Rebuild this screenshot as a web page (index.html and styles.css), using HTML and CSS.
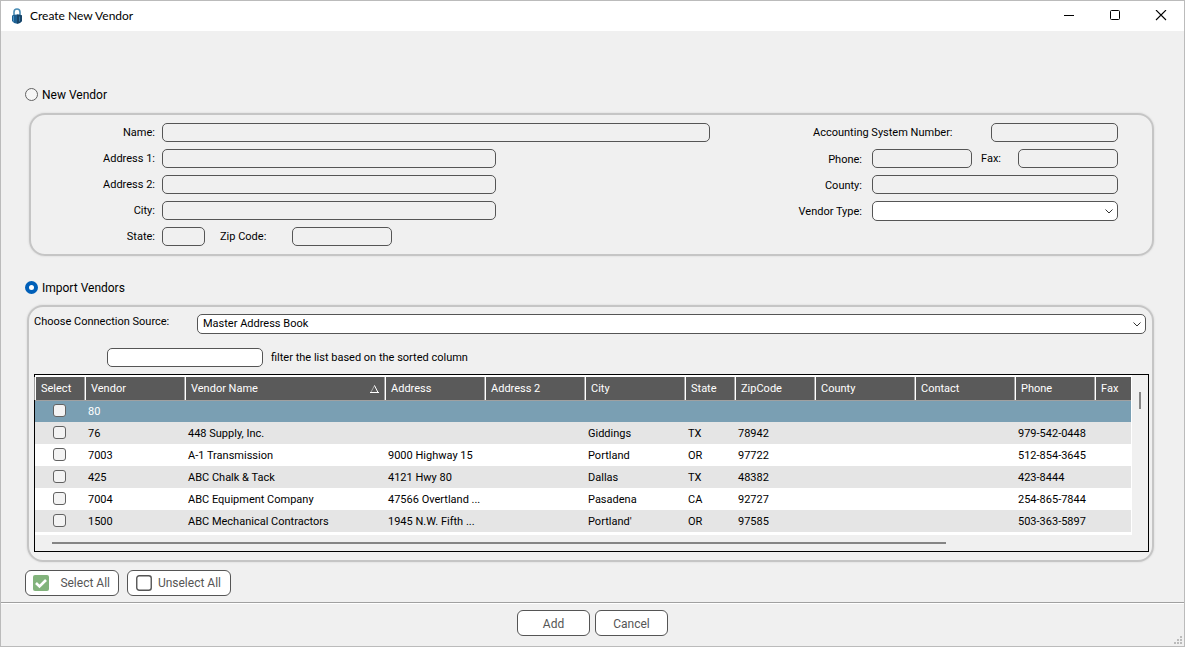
FILE: index.html
```html
<!DOCTYPE html>
<html lang="en">
<head>
<meta charset="utf-8">
<title>Create New Vendor</title>
<link rel="stylesheet" href="styles.css">
</head>
<body>
<div class="window">
  <header class="titlebar">
    <svg class="lock" width="12" height="16" viewBox="0 0 12 16" aria-hidden="true">
      <path d="M3 8V4a3 3 0 0 1 6 0v4" fill="none" stroke="#4a8db5" stroke-width="1.6"/>
      <path d="M1 7.500Q6 5.500 11 7.500V13Q9 15.800 6 15.800T1 13Z" fill="#1d5f91"/>
      <path d="M6 6.500Q9 6.500 11 7.500V13Q9 15.800 6 15.800Z" fill="#174468"/>
      <path d="M2.500 8v5.500" stroke="#4a93c4" stroke-width="1"/>
      <path d="M8.500 8.500v5" stroke="#3574a0" stroke-width="1"/>
    </svg>
    <h1 class="title">Create New Vendor</h1>
    <div class="window-controls">
      <button class="window-button" type="button" aria-label="Minimize"><svg width="12" height="12" viewBox="0 0 12 12"><path d="M1 5.500h10" stroke="#000"/></svg></button>
      <button class="window-button" type="button" aria-label="Maximize"><svg width="12" height="12" viewBox="0 0 12 12"><rect x="1.500" y=".5" width="9" height="9" rx="1" fill="none" stroke="#000"/></svg></button>
      <button class="window-button" type="button" aria-label="Close"><svg width="12" height="12" viewBox="0 0 12 12"><path d="M1 0l10 10M11 0L1 10" stroke="#000" stroke-width="1.100"/></svg></button>
    </div>
  </header>

  <main class="content">
    <label class="mode"><input class="radio" type="radio" name="mode">New Vendor</label>
    <section class="panel new-vendor">
      <div class="form-left">
        <label class="label" for="name">Name:</label><input class="field w-name" id="name" type="text">
        <label class="label" for="address1">Address 1:</label><input class="field w-address" id="address1" type="text">
        <label class="label" for="address2">Address 2:</label><input class="field w-address" id="address2" type="text">
        <label class="label" for="city">City:</label><input class="field w-address" id="city" type="text">
        <label class="label" for="state">State:</label>
        <div class="pair">
          <input class="field w-state" id="state" type="text">
          <label class="zip-label" for="zip">Zip Code:</label><input class="field w-short" id="zip" type="text">
        </div>
      </div>
      <div class="form-right">
        <div class="account"><label for="account">Accounting System Number:</label><input class="field w-account" id="account" type="text"></div>
        <label class="label" for="phone">Phone:</label>
        <div class="pair spread">
          <input class="field w-short" id="phone" type="text">
          <label class="fax-label" for="fax">Fax:</label><input class="field w-short" id="fax" type="text">
        </div>
        <label class="label" for="county">County:</label><input class="field" id="county" type="text">
        <label class="label" for="type">Vendor Type:</label><select class="select" id="type"><option></option></select>
      </div>
    </section>

    <label class="mode import-mode"><input class="radio" type="radio" name="mode" checked>Import Vendors</label>
    <section class="panel import">
      <div class="source-row">
        <label class="source-label" for="source">Choose Connection Source:</label>
        <select class="select source" id="source"><option>Master Address Book</option></select>
      </div>
      <div class="filter-row">
        <input class="field filter" id="filter" type="text">
        <label for="filter">filter the list based on the sorted column</label>
      </div>
      <div class="grid">
        <div class="grid-body">
          <table class="vendors">
            <colgroup><col class="c50"><col class="c100"><col class="c200"><col class="c100"><col class="c100"><col class="c100"><col class="c50"><col class="c80"><col class="c100"><col class="c100"><col class="c80"><col></colgroup>
            <thead><tr>
              <th>Select</th><th>Vendor</th>
              <th><span class="sorted">Vendor Name<svg width="9" height="8" viewBox="0 0 9 8" aria-hidden="true"><path d="M4.500 .5L1 7" fill="none" stroke="#aaa"/><path d="M4.500 .5L8 7.500M0 7.500h9" fill="none" stroke="#fff"/></svg></span></th>
              <th>Address</th><th>Address 2</th><th>City</th><th>State</th><th>ZipCode</th><th>County</th><th>Contact</th><th>Phone</th><th>Fax</th>
            </tr></thead>
            <tbody>
              <tr class="selected"><td><input class="check" type="checkbox" aria-label="Select 80"></td><td>80</td><td></td><td></td><td></td><td></td><td></td><td></td><td></td><td></td><td></td><td></td></tr>
              <tr><td><input class="check" type="checkbox" aria-label="Select 76"></td><td>76</td><td>448 Supply, Inc.</td><td></td><td></td><td>Giddings</td><td>TX</td><td>78942</td><td></td><td></td><td>979-542-0448</td><td></td></tr>
              <tr><td><input class="check" type="checkbox" aria-label="Select 7003"></td><td>7003</td><td>A-1 Transmission</td><td>9000 Highway 15</td><td></td><td>Portland</td><td>OR</td><td>97722</td><td></td><td></td><td>512-854-3645</td><td></td></tr>
              <tr><td><input class="check" type="checkbox" aria-label="Select 425"></td><td>425</td><td>ABC Chalk &amp; Tack</td><td>4121 Hwy 80</td><td></td><td>Dallas</td><td>TX</td><td>48382</td><td></td><td></td><td>423-8444</td><td></td></tr>
              <tr><td><input class="check" type="checkbox" aria-label="Select 7004"></td><td>7004</td><td>ABC Equipment Company</td><td>47566 Overtland ...</td><td></td><td>Pasadena</td><td>CA</td><td>92727</td><td></td><td></td><td>254-865-7844</td><td></td></tr>
              <tr><td><input class="check" type="checkbox" aria-label="Select 1500"></td><td>1500</td><td>ABC Mechanical Contractors</td><td>1945 N.W. Fifth ...</td><td></td><td>Portland'</td><td>OR</td><td>97585</td><td></td><td></td><td>503-363-5897</td><td></td></tr>
            </tbody>
          </table>
        </div>
        <div class="vscroll"><div class="vthumb"></div></div>
        <div class="hscroll"><div class="hthumb"></div></div>
      </div>
    </section>

    <div class="bulk">
      <button class="button select-all" type="button"><svg width="16" height="16" viewBox="0 0 16 16" aria-hidden="true"><rect width="16" height="16" rx="2" fill="#82b37c"/><path d="M3 8l3.500 3.500L13 5" fill="none" stroke="#fff" stroke-width="2.600"/></svg>Select All</button>
      <button class="button unselect-all" type="button"><svg width="16" height="16" viewBox="0 0 16 16" aria-hidden="true"><rect x=".75" y=".75" width="14.500" height="14.500" rx="2.500" fill="#fff" stroke="#555" stroke-width="1.400"/></svg>Unselect All</button>
    </div>
  </main>

  <footer class="footer">
    <button class="button action" type="button">Add</button>
    <button class="button action" type="button">Cancel</button>
    <svg class="grip" width="8" height="8" viewBox="0 0 8 8" aria-hidden="true"><path d="M6 0h2v2H6zM3 3h2v2H3zM6 3h2v2H6zM0 6h2v2H0zM3 6h2v2H3zM6 6h2v2H6z" fill="#bbb"/></svg>
  </footer>
</div>
</body>
</html>
```
FILE: styles.css
```css
* { box-sizing: border-box; }

body {
  margin: 0;
  background: #f0f0f0;
  color: #000;
  font: 11px/16px Roboto, "Liberation Sans", sans-serif;
}

input, select, button { margin: 0; font: inherit; color: inherit; }

.window {
  display: flex;
  flex-direction: column;
  min-height: 100vh;
  border: 1px solid #bbb;
}

.titlebar {
  display: flex;
  align-items: center;
  height: 30px;
  padding-left: 10px;
  background: #fff;
}

.title {
  margin: 0 0 0 7px;
  font: 400 12px/16px Lato, "Open Sans", sans-serif;
}

.window-controls { display: flex; margin-left: auto; }

.window-button {
  display: flex;
  align-items: center;
  justify-content: center;
  width: 46px;
  height: 28px;
  padding: 0;
  border: 0;
  background: none;
}

.content { flex: 1; padding: 55px 30px 6px 24px; }

.mode {
  display: flex;
  align-items: center;
  gap: 4px;
  width: max-content;
  font-size: 12px;
  line-height: 18px;
}

.import-mode { margin-top: 23px; }

.radio {
  appearance: none;
  width: 13px;
  height: 13px;
  margin-bottom: 2px;
  border: 1px solid #626262;
  border-radius: 50%;
  background: #f6f6f6;
}

.radio:checked { border: 4px solid #005fb8; background: #fff; }

.panel {
  border: 2px solid #c5c5c5;
  border-radius: 16px;
  box-shadow: 0 0 2px #ccc;
}

.new-vendor {
  display: flex;
  justify-content: space-between;
  margin: 9px 0 0 4px;
  padding: 8px 34px 8px 0;
}

.form-left {
  display: grid;
  flex: 0 1 680px;
  grid-template-columns: 124px 1fr;
  gap: 7px;
  align-items: center;
}

.form-right {
  display: grid;
  flex: 0 0 320px;
  grid-template-columns: 64px 1fr;
  gap: 7px 10px;
  align-content: start;
  align-items: center;
}

.label { text-align: right; white-space: nowrap; }
.form-right .label { padding-top: 2px; }

.field {
  width: 100%;
  height: 19px;
  padding: 0 5px;
  border: 1px solid #555;
  border-radius: 5px;
  background: #f0f0f0;
}

.w-name { max-width: 548px; }
.w-address { max-width: 334px; }
.w-state { width: 43px; }
.w-short { width: 100px; }
.w-account { width: 127px; }

.pair { display: flex; align-items: center; }
.spread { justify-content: space-between; }
.zip-label { width: 72px; margin-left: 15px; }
.fax-label { width: 28px; }

.account {
  display: flex;
  grid-column: 1 / -1;
  justify-content: space-between;
  align-items: center;
  padding-left: 15px;
}

.select {
  appearance: none;
  width: 100%;
  height: 20px;
  padding: 0 20px 0 5px;
  border: 1px solid #555;
  border-radius: 5px;
  background: #fff url("data:image/svg+xml,%3Csvg xmlns='http://www.w3.org/2000/svg' width='8' height='5'%3E%3Cpath d='M.5 .5L4 4L7.5 .5' fill='none' stroke='%23333'/%3E%3C/svg%3E") no-repeat right 4px center;
}

.import { margin: 8px 0 0 2px; padding: 7px 3px 8px 5px; }

.source-row { display: flex; padding-right: 3px; }
.source-label { flex: 0 0 163px; }
.source { flex: 1; }

.filter-row {
  display: flex;
  align-items: center;
  gap: 8px;
  margin: 14px 0 7px 73px;
}

.filter { width: 156px; background: #fff; }

.grid {
  display: grid;
  grid-template-columns: 1fr 16px;
  border: 1px solid #000;
}

.grid-body { padding: 2px 1px 3px 0; background: #fff; }

.vendors {
  width: 100%;
  border-collapse: collapse;
  table-layout: fixed;
}

.c50 { width: 50px; }
.c80 { width: 80px; }
.c100 { width: 100px; }
.c200 { width: 200px; }

.vendors th {
  height: 23px;
  padding: 2px 6px 0;
  border-bottom: 1px solid #a0a0a0;
  background: #5a5a5a;
  box-shadow: inset 1px 0 #fff, -1px 0 #a0a0a0;
  color: #fff;
  font-weight: 400;
  text-align: left;
}

.vendors td {
  height: 22px;
  padding: 2px 3px 0;
  overflow: hidden;
  white-space: nowrap;
}

.vendors td:first-child { padding: 0 0 1px 18px; }
.vendors tbody tr:nth-child(even) { background: #e5e5e5; }
.vendors tbody .selected { background: #7a9fb3; color: #fff; }

.sorted { display: flex; align-items: center; justify-content: space-between; }

.check {
  display: block;
  appearance: none;
  width: 13px;
  height: 13px;
  border: 1px solid #626262;
  border-radius: 3px;
  background: #f3f3f3;
}

.vscroll { padding: 17px 0 0 7px; }
.vthumb { width: 2px; height: 17px; background: #858585; }

.hscroll { grid-column: 1 / -1; height: 16px; padding: 7px 0 0 17px; }
.hthumb { width: 81.6%; height: 2px; background: #858585; }

.bulk { display: flex; gap: 8px; margin-top: 8px; }

.button {
  display: flex;
  align-items: center;
  justify-content: center;
  height: 26px;
  padding: 0 8px;
  border: 1px solid #555;
  border-radius: 6px;
  background: #fff;
  color: #555;
  font-size: 12px;
  line-height: 18px;
}

.select-all { width: 94px; padding: 0 8px 0 7px; justify-content: space-between; }
.unselect-all { width: 104px; padding: 0 9px 0 8px; justify-content: space-between; }
.action { width: 73px; padding: 2px 8px 0; }

.footer {
  display: flex;
  position: relative;
  justify-content: center;
  gap: 5px;
  padding: 7px 0 10px;
  border-top: 1px solid #a0a0a0;
  box-shadow: inset 0 1px #fff;
}

.grip { position: absolute; right: 2px; bottom: 2px; }
```
